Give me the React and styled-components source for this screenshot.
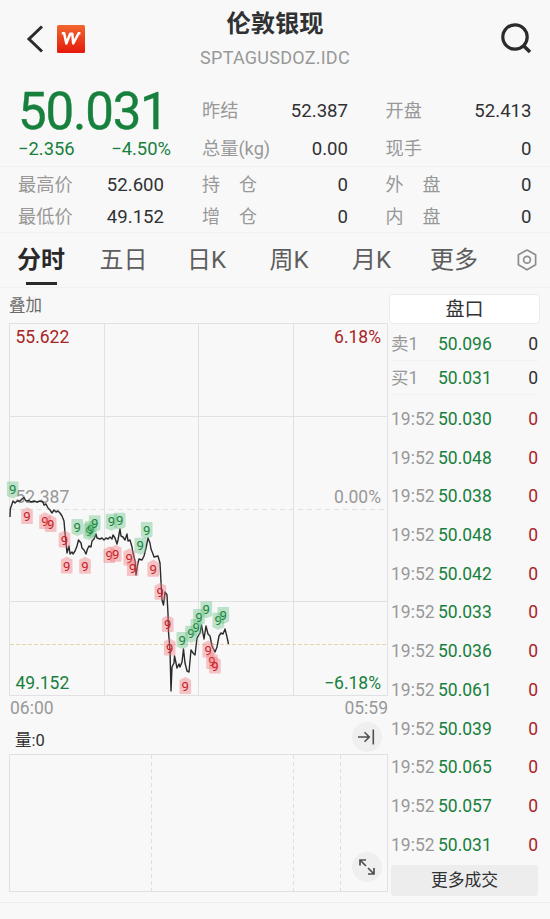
import React, { Component } from 'react';
import styled, { createGlobalStyle, css } from 'styled-components';

const GlobalStyle = createGlobalStyle`
  * { box-sizing: border-box; }
  body {
    margin: 0;
    background: #f8f8f8;
    font-family: Roboto, 'Noto Sans CJK SC', sans-serif;
    color: #303133;
  }
`;

const GREEN = '#17803d';
const RED = '#a92425';
const GREY = '#989898';

const Page = styled.div`
  width: 550px;
  height: 919px;
  overflow: hidden;
  background: #f8f8f8;
`;

const Header = styled.header`
  display: grid;
  grid-template-columns: 1fr 200px 1fr;
  height: 85px;
  padding: 0 18px 0 26px;
`;

const HeaderLeft = styled.div`
  display: flex;
  align-items: center;
  gap: 13px;
  height: 78px;
`;

const HeaderRight = styled(HeaderLeft)`
  justify-content: flex-end;
`;

const Titles = styled.div`
  display: flex;
  flex-direction: column;
  align-items: center;
  margin-left: -8px;
`;

const Title = styled.h1`
  margin: 0;
  height: 46px;
  font-size: 24.3px;
  font-weight: 700;
  line-height: 48px;
  white-space: nowrap;
`;

const SubTitle = styled.div`
  font-size: 18px;
  font-weight: 400;
  line-height: 24px;
  letter-spacing: 0.25px;
  color: ${GREY};
`;

const Quote = styled.section`
  display: grid;
  grid-template-columns: 184px 183.5px 1fr;
  height: 82px;
  padding: 7px 18px 0;
  border-bottom: 1px solid #f1f1f1;
`;

const BigPrice = styled.div`
  height: 38px;
  font-size: 51px;
  line-height: 39px;
  letter-spacing: -1.2px;
  -webkit-text-stroke: 0.4px ${GREEN};
  color: ${GREEN};
`;

const Changes = styled.div`
  display: flex;
  justify-content: space-between;
  width: 153px;
  font-size: 18.4px;
  line-height: 38px;
  color: ${GREEN};
`;

const PairColumn = styled.div`
  display: flex;
  flex-direction: column;
  width: 146px;
`;

const Pair = styled.div`
  display: flex;
  justify-content: space-between;
  font-size: 18.6px;
  line-height: ${props => props.$line || 38}px;
`;

const PairLabel = styled.span`
  font-size: 18.2px;
  color: ${GREY};
`;

const Spread = styled.span`
  display: flex;
  justify-content: space-between;
  width: 55px;
  font-size: 18px;
  color: ${GREY};
`;

const Details = styled.section`
  display: grid;
  grid-template-columns: 184px 183.5px 1fr;
  height: 66px;
  padding: 2px 18px 0;
  border-bottom: 1px solid #f1f1f1;
`;

const Tabs = styled.nav`
  display: grid;
  grid-template-columns: 82px 83px 83px 82px 83px 82px 1fr;
  height: 55px;
  border-bottom: 1px solid #f1f1f1;
`;

const Tab = styled.div`
  display: flex;
  flex-direction: column;
  align-items: center;
  font-size: 24px;
  line-height: 54px;
  height: 54px;
  color: #5e5e5e;
  white-space: nowrap;

  ${props =>
        props.$active &&
        css`
      font-weight: 600;
      color: #29292b;
      &::after {
        content: '';
        width: 31px;
        height: 3px;
        margin-top: -5px;
        background: #29292b;
      }
    `}
`;

const SettingsTab = styled(Tab)`
  padding-left: 9px;
`;

const Body = styled.main`
  display: grid;
  grid-template-columns: 389px 151px;
  height: 615px;
  border-bottom: 1px solid #ececec;
`;

const ChartColumn = styled.div`
  display: flex;
  flex-direction: column;
`;

const Overlay = styled.div`
  height: 35px;
  padding-left: 9px;
  font-size: 16.5px;
  line-height: 36px;
  color: #6c6c6c;
`;

const Times = styled.div`
  display: flex;
  justify-content: space-between;
  height: 25px;
  padding: 0 1px 0 10px;
  font-size: 17.5px;
  line-height: 23px;
  color: ${GREY};
`;

const VolumeBar = styled.div`
  display: flex;
  justify-content: space-between;
  height: 32px;
  padding: 0 7px 0 15px;
  font-size: 16.5px;
  line-height: 37px;
`;

const RoundButton = styled.div`
  display: flex;
  align-items: center;
  justify-content: center;
  width: 30px;
  height: 30px;
  border-radius: 50%;
  background: #efefef;
`;

const VolumeChart = styled.div`
  display: grid;
  grid-template-columns: 142px 142px 47px 1fr;
  width: 379px;
  height: 138px;
  margin-left: 9px;
  border: 1px solid #e1e1e3;
`;

const VolumeCell = styled.div`
  display: flex;
  align-items: flex-end;
  justify-content: flex-end;
  padding: 0 5px 9px 0;
  background: ${props => props.$dashed
        ? 'repeating-linear-gradient(#dedede 0 4px, transparent 4px 7px) right / 1px 100% no-repeat'
        : 'none'};
`;

const BookColumn = styled.div`
  display: flex;
  flex-direction: column;
  padding-top: 6px;
`;

const BookTitle = styled.div`
  height: 30px;
  margin-bottom: 4px;
  border: 1px solid #ececec;
  border-radius: 4px;
  background: #fff;
  font-size: 19px;
  line-height: 30px;
  text-align: center;
`;

const BookRow = styled.div`
  display: grid;
  grid-template-columns: 47px 1fr auto;
  height: ${props => props.$height}px;
  margin: 0 2px;
  font-size: 17.5px;
  line-height: ${props => props.$height}px;
  border-bottom: ${props => props.$line ? '1px solid #f1f1f1' : '0'};
`;

const Cell = styled.span`
  color: ${props => props.$color || '#303133'};
  white-space: nowrap;
`;

const Trades = styled.div`
  padding-top: 5px;
`;

const MoreButton = styled.div`
  height: 31px;
  margin: 1px 2px 0;
  border-radius: 3px;
  background: #ededed;
  font-size: 16.8px;
  line-height: 31px;
  text-align: center;
`;

const AxisText = styled.text`
  font-size: 17.5px;
  fill: ${props => props.$color};
`;

const TagText = styled.text`
  font-size: 13.2px;
  fill: ${props => props.$color};
  text-anchor: middle;
`;

const tabs = ['分时', '五日', '日K', '周K', '月K', '更多'];

const trades = [
    '50.030', '50.048', '50.038', '50.048', '50.042', '50.033',
    '50.036', '50.061', '50.039', '50.065', '50.057', '50.031'
];

const pricePoints = [
    [10, 517], [10.3, 509], [12, 504], [13, 501], [15, 503], [17, 501], [20, 501], [22, 499], [24, 497.5], [26, 501],
    [29, 500.5], [31, 502], [34, 501], [37, 502], [40, 501], [43, 502], [44, 505], [46, 504], [48, 508], [50, 510],
    [52, 513], [54, 510], [56, 512], [58, 511], [60, 513], [62, 516], [64, 521], [65, 533], [66, 543], [67, 553],
    [69, 546], [70, 554], [72, 552], [73, 554], [75, 551], [77, 546], [78.5, 540], [81, 543], [82, 548], [84, 550],
    [86, 554], [87.5, 549], [89, 546], [91, 547], [92, 541], [94, 539], [96, 534], [97, 538], [100, 539], [102, 538],
    [104, 540], [106, 538], [108, 539], [110, 537], [112, 539], [113, 535], [115, 538], [117, 544], [118, 540],
    [120, 529], [121, 536], [123, 537], [125, 540], [127, 534], [128, 541], [130, 540], [132, 547], [133, 553],
    [135, 561], [136, 575], [137.5, 565], [139, 559], [142, 560], [144, 556], [146, 548], [148, 538], [150, 543],
    [151, 549], [153, 554], [154, 557], [158, 556], [160, 563], [161, 582], [162, 600], [163.5, 605], [165, 592],
    [167, 595], [168, 614], [168.5, 632], [170, 650], [171, 691], [172, 667], [174, 663], [174.5, 656], [176, 663],
    [177, 668], [179, 664], [180, 667], [182, 662], [183.5, 649], [185, 663], [187, 671], [189, 672], [191, 650],
    [193, 653], [195, 655], [197, 638], [200, 633], [201.5, 625], [204, 639], [206, 626], [208, 634], [210, 636],
    [212, 646], [215, 652], [217, 647], [219, 636], [221, 633], [223, 634], [225, 629], [227, 637], [228.5, 644]
];

const upTags = [
    [12.7, 489.5], [77.3, 527], [89, 531.3], [90.7, 529], [94.7, 523.3], [111.5, 521.7], [119.7, 520.7],
    [146.7, 530], [140.3, 545.7], [182.3, 640], [191, 633.7], [196.3, 627], [199, 617], [206.3, 609.3],
    [218.3, 620.7], [223.3, 615]
];

const downTags = [
    [27, 516.7], [45, 521.7], [50.7, 524.5], [64.5, 540], [66.7, 566], [85, 566.3], [109.3, 555.7], [115.7, 554.3],
    [129.3, 558], [132.7, 568.7], [153.3, 569.3], [160.3, 592.3], [167.7, 624.7], [169.7, 648], [208.3, 650],
    [212, 661.7], [215, 666], [185.3, 686.5]
];

const Tag = ({ x, y, down }) => (
    <g transform={`translate(${x} ${y - 323})`}>
        <path
            d={down
                ? 'M-5.8 -6 Q-5.8 -7 -4.8 -7 L0 -9.5 L4.8 -7 Q5.8 -7 5.8 -6 V6.2 Q5.8 7.4 4.8 7.4 H-4.8 Q-5.8 7.4 -5.8 6.2Z'
                : 'M-5.8 -7 Q-5.8 -8 -4.8 -8 H4.8 Q5.8 -8 5.8 -7 V5.5 Q5.8 6.5 4.8 7 L0 9 L-4.8 7 Q-5.8 6.5 -5.8 5.5Z'}
            fill={down ? '#ed7379' : '#63bd83'}
            opacity="0.4"
        />
        <TagText y="4.7" $color={down ? '#c81e27' : '#15853c'}>9</TagText>
    </g>
);

const PriceChart = () => (
    <svg width="389" height="374" viewBox="0 0 389 374">
        <g stroke="#e1e1e4" fill="none">
            <rect x="9.5" y="0.5" width="378" height="372" />
            <path d="M104.5 0V372M198.5 0V372M293.5 0V372M10 93.5H387M10 278.5H387" />
            <path d="M10 186.5H387" strokeDasharray="5 4" />
            <path d="M10 321.5H387" stroke="#ead2ac" strokeDasharray="4 2" />
        </g>
        <AxisText x="15.5" y="20" $color={RED}>55.622</AxisText>
        <AxisText x="381" y="20" textAnchor="end" $color={RED}>6.18%</AxisText>
        <AxisText x="15.5" y="180" $color={GREY}>52.387</AxisText>
        <AxisText x="381" y="180" textAnchor="end" $color={GREY}>0.00%</AxisText>
        <AxisText x="15.5" y="366" $color={GREEN}>49.152</AxisText>
        <AxisText x="381" y="366" textAnchor="end" $color={GREEN}>−6.18%</AxisText>
        <polyline
            points={pricePoints.map(([x, y]) => `${x},${y - 323}`).join(' ')}
            fill="none"
            stroke="#2b2b2b"
            strokeWidth="1.4"
            strokeLinejoin="round"
        />
        {upTags.map(([x, y]) => <Tag key={`${x}-${y}`} x={x} y={y} />)}
        {downTags.map(([x, y]) => <Tag key={`${x}-${y}`} x={x} y={y} down />)}
    </svg>
);

const BackIcon = () => (
    <svg width="18" height="28" viewBox="0 0 18 28" fill="none" stroke="#2b2b2b" strokeWidth="3">
        <path d="M16 1.5 L3 14 L16 26.5" />
    </svg>
);

const Logo = () => (
    <svg width="28" height="28" viewBox="0 0 28 28">
        <defs>
            <linearGradient id="logoFill" x1="0" y1="0" x2="0" y2="1">
                <stop offset="0" stopColor="#f2662f" />
                <stop offset="1" stopColor="#e5190c" />
            </linearGradient>
        </defs>
        <rect width="28" height="28" rx="1.5" fill="url(#logoFill)" />
        <path d="M4.8 8.3H7.2L9.3 18.5L13.2 8.7H15.3L16.2 18.5L21.6 8.3H23.4" fill="none" stroke="#fff" strokeWidth="2.5" strokeLinejoin="round" />
    </svg>
);

const SearchIcon = () => (
    <svg width="32" height="32" viewBox="0 0 32 32" fill="none" stroke="#2b2b2b" strokeWidth="3.2">
        <circle cx="15" cy="14" r="12.2" />
        <path d="M23.3 22.5 L30 29" strokeWidth="3.6" />
    </svg>
);

const SettingsIcon = () => (
    <svg width="22" height="52" viewBox="0 0 22 52" fill="none" stroke="#8d8d8d" strokeWidth="1.7">
        <path d="M11 17 L19.6 21.8 V31.8 L11 36.8 L2.4 31.8 V21.8Z" strokeLinejoin="round" />
        <circle cx="11" cy="26.8" r="3.4" />
    </svg>
);

const SkipIcon = () => (
    <svg width="18" height="18" viewBox="0 0 18 18" fill="none" stroke="#505050" strokeWidth="1.6">
        <path d="M0 9H11M6.5 4.2L11.3 9L6.5 13.8M15.3 1.5V16.5" />
    </svg>
);

const ExpandIcon = () => (
    <svg width="18" height="18" viewBox="0 0 18 18" fill="none" stroke="#505050" strokeWidth="1.7">
        <path d="M8 8L2 2M2 7.5V2H8M10 10L16 16M16 10V16H10" />
    </svg>
);

class App extends Component {
    state = { activeTab: '分时' };

    renderSpread = (chars, value) => (
        <Pair $line={32}>
            <Spread><span>{chars[0]}</span><span>{chars[1]}</span></Spread>
            <span>{value}</span>
        </Pair>
    );

    render() {
        return (
            <Page>
                <GlobalStyle />
                <Header>
                    <HeaderLeft>
                        <BackIcon />
                        <Logo />
                    </HeaderLeft>
                    <Titles>
                        <Title>伦敦银现</Title>
                        <SubTitle>SPTAGUSDOZ.IDC</SubTitle>
                    </Titles>
                    <HeaderRight><SearchIcon /></HeaderRight>
                </Header>

                <Quote>
                    <div>
                        <BigPrice>50.031</BigPrice>
                        <Changes><span>−2.356</span><span>−4.50%</span></Changes>
                    </div>
                    <PairColumn>
                        <Pair><PairLabel>昨结</PairLabel><span>52.387</span></Pair>
                        <Pair><PairLabel>总量(kg)</PairLabel><span>0.00</span></Pair>
                    </PairColumn>
                    <PairColumn>
                        <Pair><PairLabel>开盘</PairLabel><span>52.413</span></Pair>
                        <Pair><PairLabel>现手</PairLabel><span>0</span></Pair>
                    </PairColumn>
                </Quote>

                <Details>
                    <PairColumn>
                        <Pair $line={32}><PairLabel>最高价</PairLabel><span>52.600</span></Pair>
                        <Pair $line={32}><PairLabel>最低价</PairLabel><span>49.152</span></Pair>
                    </PairColumn>
                    <PairColumn>
                        {this.renderSpread('持仓', '0')}
                        {this.renderSpread('增仓', '0')}
                    </PairColumn>
                    <PairColumn>
                        {this.renderSpread('外盘', '0')}
                        {this.renderSpread('内盘', '0')}
                    </PairColumn>
                </Details>

                <Tabs>
                    {tabs.map(name => (
                        <Tab
                            key={name}
                            $active={name === this.state.activeTab}
                            onClick={() => this.setState({ activeTab: name })}
                        >
                            {name}
                        </Tab>
                    ))}
                    <SettingsTab><SettingsIcon /></SettingsTab>
                </Tabs>

                <Body>
                    <ChartColumn>
                        <Overlay>叠加</Overlay>
                        <PriceChart />
                        <Times><span>06:00</span><span>05:59</span></Times>
                        <VolumeBar>
                            <span>量:0</span>
                            <RoundButton><SkipIcon /></RoundButton>
                        </VolumeBar>
                        <VolumeChart>
                            <VolumeCell $dashed />
                            <VolumeCell $dashed />
                            <VolumeCell $dashed />
                            <VolumeCell><RoundButton><ExpandIcon /></RoundButton></VolumeCell>
                        </VolumeChart>
                    </ChartColumn>

                    <BookColumn>
                        <BookTitle>盘口</BookTitle>
                        <BookRow $height={33} $line>
                            <Cell $color={GREY}>卖1</Cell>
                            <Cell $color={GREEN}>50.096</Cell>
                            <Cell>0</Cell>
                        </BookRow>
                        <BookRow $height={34} $line>
                            <Cell $color={GREY}>买1</Cell>
                            <Cell $color={GREEN}>50.031</Cell>
                            <Cell>0</Cell>
                        </BookRow>
                        <Trades>
                            {trades.map((price, i) => (
                                <BookRow key={i} $height={38.7}>
                                    <Cell $color={GREY}>19:52</Cell>
                                    <Cell $color={GREEN}>{price}</Cell>
                                    <Cell $color={RED}>0</Cell>
                                </BookRow>
                            ))}
                        </Trades>
                        <MoreButton>更多成交</MoreButton>
                    </BookColumn>
                </Body>
            </Page>
        );
    }
}

export default App;
